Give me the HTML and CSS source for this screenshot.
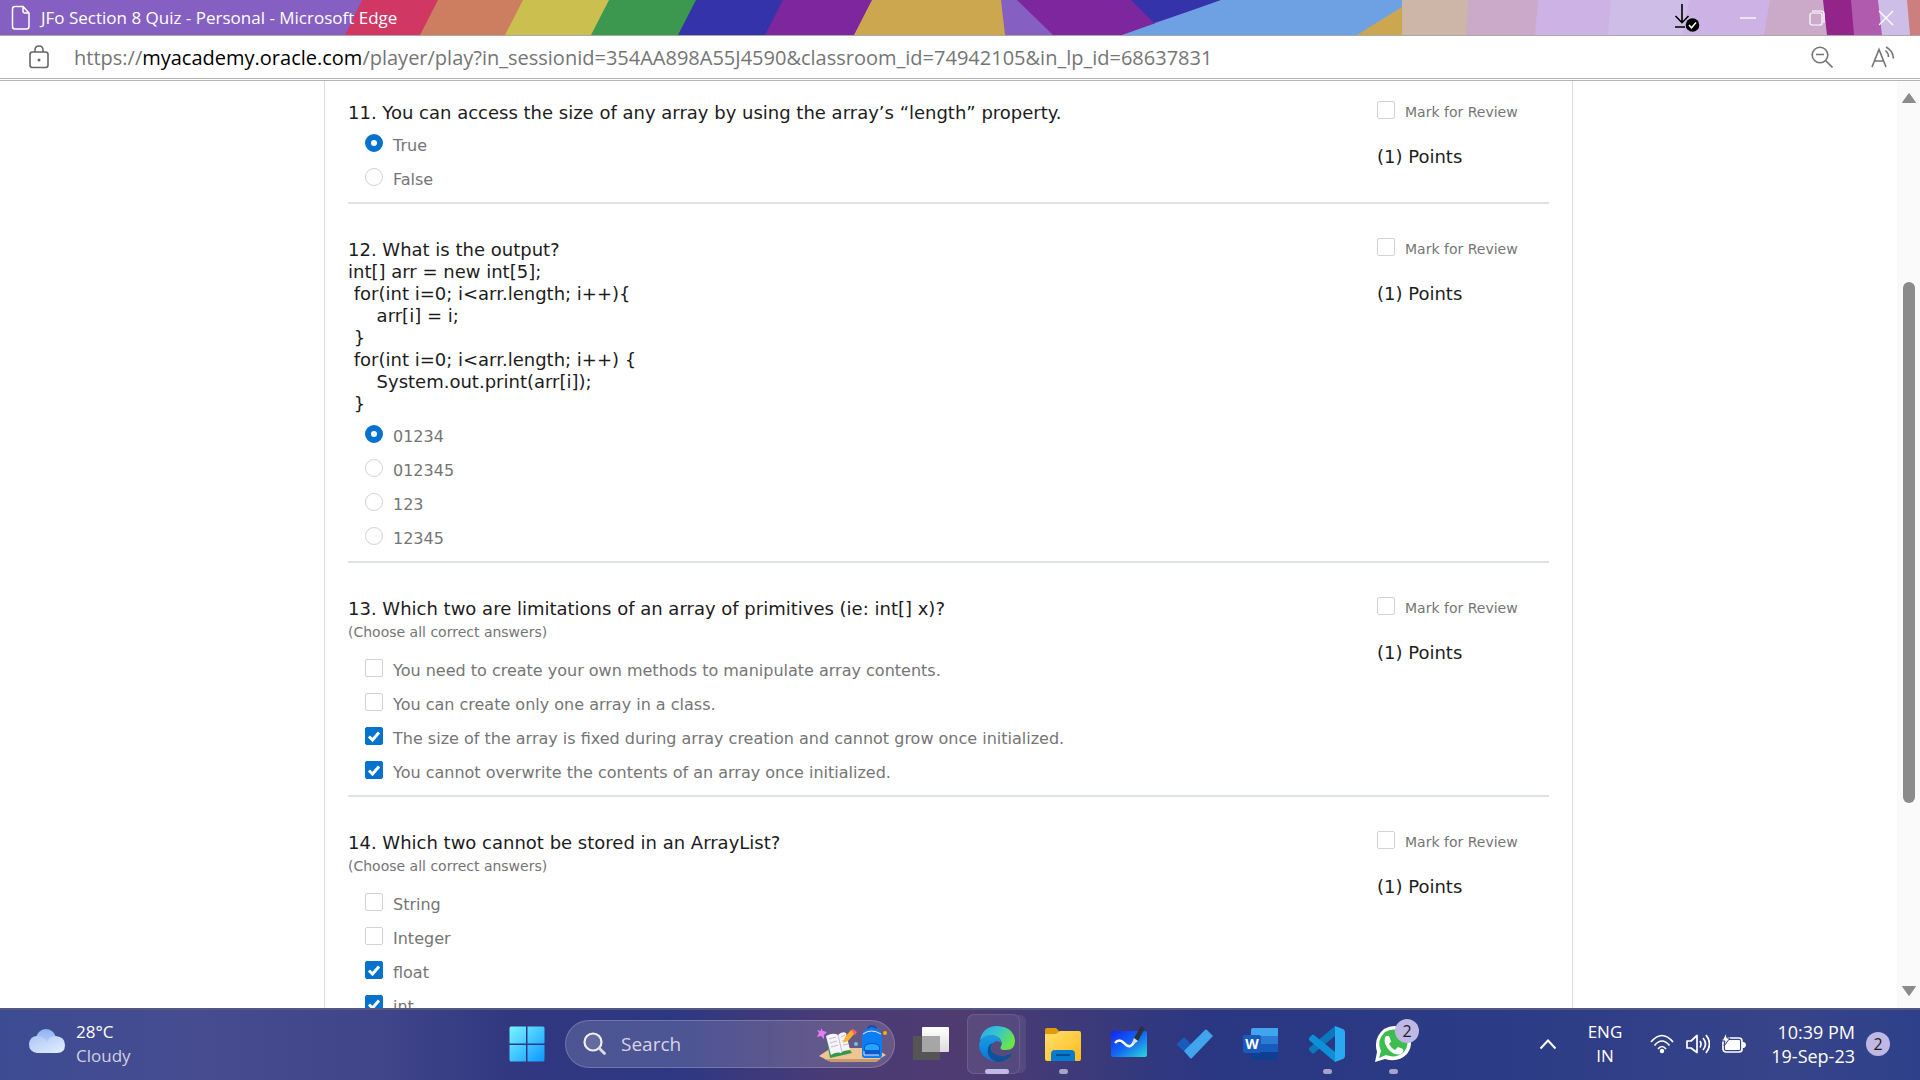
FILE: index.html
```html
<!DOCTYPE html>
<html lang="en">
<head>
<meta charset="UTF-8">
<title>JFo Section 8 Quiz</title>
<link rel="stylesheet" href="styles.css">
</head>
<body>

<header class="titlebar">
	<svg class="stripes" viewBox="0 0 1920 35" preserveAspectRatio="none" aria-hidden="true">
		<path fill="#865fc3" d="M0 0h1920v35H0z"/>
		<path fill="#d03763" d="M362 0h80l-18 35h-79z"/>
		<path fill="#cd7d60" d="M438 0h90l-18 35h-90z"/>
		<path fill="#cbc04f" d="M523 0h90l-18 35h-90z"/>
		<path fill="#3d984f" d="M609 0h90l-18 35h-90z"/>
		<path fill="#3533aa" d="M696 0h90l-18 35h-90z"/>
		<path fill="#7d269e" d="M783 0h90l-18 35h-90z"/>
		<path fill="#cda750" d="M872 0h129l4 35H854z"/>
		<path fill="#7d269e" d="M1017 0h116l23 24-30 11h-73z"/>
		<path fill="#3533aa" d="M1131 0h94l-71 23z"/>
		<path fill="#6da1e4" d="M1221 0h181v35h-280z"/>
		<path fill="#cda750" d="M1402 7v28h-45z"/>
		<path fill="#cdb5a8" d="M1402 0h68l-2 35h-66z"/>
		<path fill="#cba9c9" d="M1468 0h72l-3 35h-71z"/>
		<path fill="#cdb2e5" d="M1538 0h76l-4 35h-75z"/>
		<path fill="#cebee7" d="M1611 0h80l-5 35h-78z"/>
		<path fill="#cdb2e5" d="M1689 0h83l-6 35h-83z"/>
		<path fill="#cba9c9" d="M1770 0h55l4 35h-65z"/>
		<path fill="#93258a" d="M1823 0h29l4 35h-29z"/>
		<path fill="#b05bae" d="M1851 0h29l4 35h-30z"/>
		<path fill="#cebee7" d="M1878 0h30l4 35h-30z"/>
		<path fill="#cd7f80" d="M1907 0h13v35h-10z"/>
	</svg>
	<svg class="page-icon" viewBox="0 0 20 26" aria-hidden="true">
		<path fill="none" stroke="#fff" stroke-width="1.500" d="M12 1.500H4Q1.500 1.500 1.500 4v17.500Q1.500 24 4 24h11.500q2.500 0 2.500-2.500V8zM12 1.500V6q0 2 2 2h4"/>
	</svg>
	<h1 class="window-title">JFo Section 8 Quiz - Personal - Microsoft Edge</h1>
	<div class="window-buttons">
		<button type="button" class="win-btn download" aria-label="Downloads">
			<svg width="26" height="30" viewBox="0 0 26 30"><path fill="none" stroke="#000" stroke-width="1.600" d="M8 1v19M1.500 13L8 19.700 14.500 13M1 24h10"/><circle cx="18.500" cy="22" r="6.800"/><path fill="none" stroke="#fff" stroke-width="1.500" d="M15 22l2.500 2.800 4.500-5.300"/></svg>
		</button>
		<button type="button" class="win-btn" aria-label="Minimize">
			<svg width="16" height="16" viewBox="0 0 16 16"><path stroke="#fff" stroke-width="1.300" d="M0 8h16"/></svg>
		</button>
		<button type="button" class="win-btn" aria-label="Restore">
			<svg width="16" height="16" viewBox="0 0 16 16"><g fill="none" stroke="#fff" stroke-width="1.200"><rect x="1" y="3" width="12" height="12" rx="2"/><path d="M3 1h9q3 0 3 3v9"/></g></svg>
		</button>
		<button type="button" class="win-btn" aria-label="Close">
			<svg width="16" height="16" viewBox="0 0 16 16"><path stroke="#fff" stroke-width="1.300" d="M1 1l14 14M15 1L1 15"/></svg>
		</button>
	</div>
</header>

<div class="address-bar">
	<svg class="lock" viewBox="0 0 20 24" aria-hidden="true">
		<g fill="none" stroke="#666" stroke-width="1.600"><rect x="1" y="7" width="18" height="15.500" rx="2.500"/><path d="M6 7V5q0-4 4-4t4 4v2"/></g><circle cx="10" cy="15" r="1.500" fill="#666"/>
	</svg>
	<div class="url">https://<span class="domain">myacademy.oracle.com</span>/player/play?in_sessionid=354AA898A55J4590&amp;classroom_id=74942105&amp;in_lp_id=68637831</div>
	<button type="button" class="tool" aria-label="Zoom out">
		<svg width="22" height="22" viewBox="0 0 22 22"><g fill="none" stroke="#757575" stroke-width="1.600"><circle cx="9" cy="9" r="7.800"/><path d="M5 8.500h8M14.500 14.500L21.500 21.500"/></g></svg>
	</button>
	<button type="button" class="tool" aria-label="Read aloud">
		<svg width="24" height="22" viewBox="0 0 24 22"><g fill="none" stroke="#757575" stroke-width="1.600"><path d="M1 21L8 3.500 15 21M3.500 15h9M14.500 4.500q3 2.500 3 6.500M15 1q7 3.500 7.500 11.500"/></g></svg>
	</button>
</div>

<div class="viewport">
	<main class="quiz">
		<form>

			<section class="question">
				<div class="body">
					<h2 class="title">11. You can access the size of any array by using the array’s “length” property.</h2>
					<ul class="answers">
						<li><label><input type="radio" name="q11" checked><span>True</span></label></li>
						<li><label><input type="radio" name="q11"><span>False</span></label></li>
					</ul>
				</div>
				<div class="side">
					<label class="review"><input type="checkbox"><span>Mark for Review</span></label>
					<p class="points">(1) Points</p>
				</div>
			</section>

			<section class="question">
				<div class="body">
					<h2 class="title">12. What is the output?</h2>
					<pre class="code">int[] arr = new int[5];
 for(int i=0; i&lt;arr.length; i++){
     arr[i] = i;
 }
 for(int i=0; i&lt;arr.length; i++) {
     System.out.print(arr[i]);
 }</pre>
					<ul class="answers">
						<li><label><input type="radio" name="q12" checked><span>01234</span></label></li>
						<li><label><input type="radio" name="q12"><span>012345</span></label></li>
						<li><label><input type="radio" name="q12"><span>123</span></label></li>
						<li><label><input type="radio" name="q12"><span>12345</span></label></li>
					</ul>
				</div>
				<div class="side">
					<label class="review"><input type="checkbox"><span>Mark for Review</span></label>
					<p class="points">(1) Points</p>
				</div>
			</section>

			<section class="question">
				<div class="body">
					<h2 class="title">13. Which two are limitations of an array of primitives (ie: int[] x)?</h2>
					<p class="hint">(Choose all correct answers)</p>
					<ul class="answers">
						<li><label><input type="checkbox"><span>You need to create your own methods to manipulate array contents.</span></label></li>
						<li><label><input type="checkbox"><span>You can create only one array in a class.</span></label></li>
						<li><label><input type="checkbox" checked><span>The size of the array is fixed during array creation and cannot grow once initialized.</span></label></li>
						<li><label><input type="checkbox" checked><span>You cannot overwrite the contents of an array once initialized.</span></label></li>
					</ul>
				</div>
				<div class="side">
					<label class="review"><input type="checkbox"><span>Mark for Review</span></label>
					<p class="points">(1) Points</p>
				</div>
			</section>

			<section class="question">
				<div class="body">
					<h2 class="title">14. Which two cannot be stored in an ArrayList?</h2>
					<p class="hint">(Choose all correct answers)</p>
					<ul class="answers">
						<li><label><input type="checkbox"><span>String</span></label></li>
						<li><label><input type="checkbox"><span>Integer</span></label></li>
						<li><label><input type="checkbox" checked><span>float</span></label></li>
						<li><label><input type="checkbox" checked><span>int</span></label></li>
					</ul>
				</div>
				<div class="side">
					<label class="review"><input type="checkbox"><span>Mark for Review</span></label>
					<p class="points">(1) Points</p>
				</div>
			</section>

		</form>
	</main>
	<div class="scrollbar" aria-hidden="true">
		<svg width="14" height="10" viewBox="0 0 14 10"><path fill="#8b8b8b" stroke="#8b8b8b" stroke-linejoin="round" d="M7 .500L13.500 9.500H.500z"/></svg>
		<div class="track"><div class="thumb"></div></div>
		<svg width="14" height="10" viewBox="0 0 14 10"><path fill="#8b8b8b" stroke="#8b8b8b" stroke-linejoin="round" d="M7 9.500L13.500 .500H.500z"/></svg>
	</div>
</div>

<footer class="taskbar">
	<div class="weather">
		<svg width="36" height="24" viewBox="0 0 36 24" aria-hidden="true">
			<defs>
				<linearGradient id="cloudBack" x1="0" y1="0" x2="0" y2="1"><stop offset="0" stop-color="#8fb2f2"/><stop offset="1" stop-color="#c5d9fb"/></linearGradient>
				<linearGradient id="cloudFront" x1="0" y1="0" x2="1" y2="1"><stop offset="0" stop-color="#a9c5f5"/><stop offset="1" stop-color="#e6f0ff"/></linearGradient>
			</defs>
			<circle cx="17" cy="10" r="10" fill="url(#cloudBack)"/>
			<path fill="url(#cloudFront)" d="M8 7q7 0 10 6 2-6 9-6 9 1 9 9 0 8-8 8H8q-8-1-8-9 1-8 8-8z"/>
		</svg>
		<p><span class="temp">28°C</span><span class="sky">Cloudy</span></p>
	</div>

	<nav class="apps">
		<button type="button" class="app" aria-label="Start">
			<svg width="36" height="36" viewBox="0 0 36 36">
				<defs><linearGradient id="win" gradientUnits="userSpaceOnUse" x1="0" y1="0" x2="36" y2="36"><stop offset="0" stop-color="#7af6ff"/><stop offset="1" stop-color="#0a96ff"/></linearGradient></defs>
				<path fill="url(#win)" d="M2 .500h15v17H.500V2q0-1.500 1.500-1.500zM18.500.500H34q1.500 0 1.500 1.500v15.500h-17zM.500 19H17v16.500H2q-1.500 0-1.500-1.500zM18.500 19h17v15q0 1.500-1.500 1.500H18.500z"/>
			</svg>
		</button>
		<label class="search">
			<svg width="24" height="24" viewBox="0 0 24 24" aria-hidden="true"><circle cx="10" cy="10" r="8.500" fill="#ffffff22" stroke="#f0f0f5" stroke-width="2.200"/><path stroke="#dcdce4" stroke-width="2.800" stroke-linecap="round" d="M16.500 16.500l5 5"/></svg>
			<input type="search" placeholder="Search" aria-label="Search">
			<svg class="highlight" width="70" height="38" viewBox="0 0 70 38" aria-hidden="true">
				<path fill="#efc596" d="M2 31l12-8h44l11 7-10 6H12z"/>
				<path fill="#c99b6c" d="M7 34h57l-5 3H14z"/>
				<path fill="#e37cf5" d="M4 3l2 3 4 1-3 3 0 4-3-3-4 1 2-4-2-3 4 1z"/>
				<path fill="#2e9a50" d="M9 12l4 21 22-5-2-3-19 4z"/>
				<path fill="#f6f3fb" d="M9 11q7-4 12-1 4-4 8-2l4 17q-6-1-9 3-5-2-10 2z"/>
				<path fill="none" stroke="#a9a4bd" stroke-width=".700" d="M21 10l4 17M12 14l7-2M13 18l7-2M14 22l7-2M24 12l4-2M25 16l5-2M26 20l5-1"/>
				<path fill="#ffb02e" d="M26 18l2-6 6-7 4 3-7 8z"/><path fill="#f8625c" d="M34 5l2-1 4 3-2 3z"/>
				<circle cx="39" cy="19" r="2" fill="#5ad0d8"/><circle cx="68" cy="8" r="2" fill="#ffae00"/>
				<path fill="none" stroke="#1650b0" stroke-width="2" d="M51 5q0-4 4-4t4 4"/>
				<path fill="#0b7ff2" d="M45 14q0-11 10-11t10 11v16q0 3-3 3H48q-3 0-3-3z"/>
				<path fill="#065bc9" d="M47 23q0-5 8-5t8 5v7H47z"/><path fill="#27a3ff" d="M48 22q1-3 7-3t7 3v3H48z"/>
				<path fill="none" stroke="#f3dcff" d="M46 9q8-6 18 0M47 26v4h15"/>
			</svg>
		</label>
		<button type="button" class="app view" aria-label="Task view">
			<svg width="36" height="36" viewBox="0 0 36 36">
				<defs><linearGradient id="tvA" x1="0" y1="0" x2="0" y2="1"><stop offset="0" stop-color="#fff"/><stop offset="1" stop-color="#dcdcdc"/></linearGradient></defs>
				<rect x="9" y="1" width="27" height="25" rx="1" fill="url(#tvA)"/><rect x="0" y="10" width="27" height="24" rx="1" fill="#555"/><path fill="#a6a6a6" d="M9 10h18v16H9z"/>
			</svg>
		</button>
		<button type="button" class="app running active" aria-label="Microsoft Edge">
			<svg width="36" height="36" viewBox="0 0 36 36">
				<defs>
					<linearGradient id="edgeA" x1="0" y1="0" x2="1" y2=".5"><stop offset="0" stop-color="#2aa7ee"/><stop offset=".5" stop-color="#36c5d0"/><stop offset="1" stop-color="#69e647"/></linearGradient>
					<linearGradient id="edgeB" x1="0" y1="0" x2="0" y2="1"><stop offset="0" stop-color="#1c9ce0"/><stop offset="1" stop-color="#0678d8"/></linearGradient>
				</defs>
				<path fill="url(#edgeA)" d="M1 14Q4 0 18 0q17 1 18 15 0 10-11 9-5 0-3-4 2-3-1-7-5-6-14-2-3 1-6 3z"/>
				<path fill="url(#edgeB)" d="M0 18Q2 9 12 9q9 0 10 8-4-4-8 0-4 6 1 12 5 5 10 5-5 3-11 1Q0 31 0 18z"/>
				<path fill="#0f5196" d="M14 17q-4 5 0 10 7 6 17 1 3-1 1 2-6 6-14 6Q7 32 9 22q1-4 5-5z"/>
			</svg>
		</button>
		<button type="button" class="app running" aria-label="File Explorer">
			<svg width="36" height="36" viewBox="0 0 36 36">
				<defs><linearGradient id="folder" x1="0" y1="0" x2="1" y2="1"><stop offset="0" stop-color="#ffdf70"/><stop offset="1" stop-color="#fcbc16"/></linearGradient></defs>
				<path fill="#df9c08" d="M0 4q0-2 2-2h9l4 4v6H0z"/><path fill="url(#folder)" d="M0 8h11l4-3h19q2 0 2 2v26q0 2-2 2H2q-2 0-2-2z"/><path fill="#087bd0" d="M6 35v-7q0-4 4-4h16q4 0 4 4v7z"/><path stroke="#08508f" stroke-width="2" d="M11 29h14"/>
			</svg>
		</button>
		<button type="button" class="app" aria-label="Whiteboard">
			<svg width="36" height="36" viewBox="0 0 36 36">
				<defs><linearGradient id="board" x1="0" y1="0" x2="1" y2="1"><stop offset="0" stop-color="#1425f2"/><stop offset=".5" stop-color="#1168f5"/><stop offset="1" stop-color="#30d6d7"/></linearGradient></defs>
				<rect y="5" width="36" height="26" rx="2" fill="url(#board)"/><path fill="none" stroke="#fff" stroke-width="2.500" d="M4 17q4-5 9 0 6 7 10-1"/><path fill="#303038" d="M23 12L30 0l4 2-7 13z"/><path fill="#ddd" d="M21 17l2-5 4 3-4 3z"/>
			</svg>
		</button>
		<button type="button" class="app" aria-label="To Do">
			<svg width="36" height="36" viewBox="0 0 36 36">
				<path fill="#185abd" d="M0 18l6-6q1-1 2 0l9 9-7 7L0 19z"/><path fill="#41a5ee" d="M7 25L28 4q1-1 2 0l6 6-21 22q-1 1-2 0z"/>
			</svg>
		</button>
		<button type="button" class="app" aria-label="Word">
			<svg width="36" height="36" viewBox="0 0 36 36">
				<path fill="#41a5ee" d="M8 4q0-2 2-2h25v8H8z"/><path fill="#2b7cd3" d="M8 10h27v8H8z"/><path fill="#185abd" d="M8 18h27v8H8z"/><path fill="#103f91" d="M8 26h27v8H10q-2 0-2-2z"/><rect y="9" width="18" height="18" rx="2" fill="#185abd"/><text x="9" y="23" text-anchor="middle" class="word-letter">W</text>
			</svg>
		</button>
		<button type="button" class="app running" aria-label="Visual Studio Code">
			<svg width="36" height="36" viewBox="0 0 36 36">
				<path fill="#0a78bd" d="M26 0v10L5 27q-1 1-2 0l-3-3q-1-1 0-2z"/><path fill="#0e90d8" d="M26 36V26L5 9q-1-1-2 0l-3 3q-1 1 0 2z"/><path fill="#29a9f2" d="M26 0l8 3q2 1 2 3v24q0 2-2 3l-8 3z"/>
			</svg>
		</button>
		<button type="button" class="app running" aria-label="WhatsApp">
			<svg width="36" height="36" viewBox="0 0 36 36">
				<path fill="#fff" d="M0 36l2-10Q-2 12 9 3q13-7 23 3 8 11 0 22-9 9-22 5z"/><path fill="#3dbd4e" d="M4 32l2-7Q1 14 10 6q10-6 19 2 7 9 0 18-8 7-18 3z"/><path fill="#fff" d="M10 11q2-2 4-1l2 5q0 1-2 3 2 4 6 6l3-3 5 2q1 3-2 5-5 2-11-3-7-7-5-14z"/>
			</svg>
			<span class="badge on-app">2</span>
		</button>
	</nav>

	<div class="tray">
		<button type="button" class="tray-btn" aria-label="Show hidden icons">
			<svg width="18" height="12" viewBox="0 0 18 12"><path fill="none" stroke="#fff" stroke-width="2" d="M1.500 10.500L9 2.500l7.500 8"/></svg>
		</button>
		<p class="lang"><span>ENG</span><span>IN</span></p>
		<div class="status">
			<svg width="24" height="20" viewBox="0 0 24 20" aria-hidden="true"><g fill="none" stroke="#fff" stroke-width="1.700"><path d="M1 8q11-13 22 0M4.500 11.500q7.500-9 15 0M8 15q4-5 8 0"/></g><circle cx="12" cy="17" r="2.200" fill="#fff"/></svg>
			<svg width="24" height="20" viewBox="0 0 24 20" aria-hidden="true"><g fill="none" stroke="#fff" stroke-width="1.700"><path stroke-linejoin="round" d="M1 7h4l6-5.500v17L5 14H1zM14 7q2 3 0 6.500M17 4q5 6 0 12M20 1q7 9 0 18"/></g></svg>
			<svg width="24" height="22" viewBox="0 0 24 22" aria-hidden="true"><rect x="1" y="5" width="19" height="14" rx="3" fill="none" stroke="#fff" stroke-width="1.700"/><rect x="3" y="7" width="15" height="10" rx="1" fill="#fff"/><path fill="#fff" d="M20 9h2q2 1 2 3t-2 3h-2z"/><path fill="#fff" stroke="#2e408b" d="M4 0L0 8h3l-1 5 6-8H5z"/></svg>
		</div>
		<p class="clock"><span>10:39 PM</span><span>19-Sep-23</span></p>
		<span class="badge">2</span>
	</div>
</footer>

</body>
</html>
```

FILE: styles.css
```css
* {
	box-sizing: border-box;
}

body {
	margin: 0;
	height: 100vh;
	display: flex;
	flex-direction: column;
	overflow: hidden;
	background: #fff;
	font-family: "DejaVu Sans", sans-serif;
	color: #1c1c1c;
}

h1, h2, p, ul, pre {
	margin: 0;
	padding: 0;
	font-weight: normal;
}

button {
	border: 0;
	padding: 0;
	background: none;
}

svg {
	display: block;
	flex: none;
}

/* window frame */
.titlebar {
	position: relative;
	height: 36px;
	flex: none;
	display: flex;
	align-items: center;
	padding-left: 11px;
	border-bottom: 1px solid #a9a9a9;
	font-family: "Open Sans", sans-serif;
	color: #fff;
}

.stripes {
	position: absolute;
	top: 0;
	left: 0;
	width: 100%;
	height: 100%;
	z-index: -1;
}

.page-icon {
	width: 20px;
	height: 26px;
}

.window-title {
	margin-left: 10px;
	font-size: 17px;
}

.window-buttons {
	margin-left: auto;
	display: flex;
}

.win-btn {
	width: 69px;
	height: 35px;
	display: flex;
	align-items: center;
	justify-content: center;
}

.win-btn.download {
	width: 52px;
}

.address-bar {
	flex: none;
	height: 45px;
	display: flex;
	align-items: center;
	gap: 38px;
	padding: 0 25px 0 29px;
	border-bottom: 3px double #b4b4b4;
	font-family: "Open Sans", sans-serif;
	font-size: 20px;
	color: #757575;
}

.lock {
	width: 20px;
	height: 24px;
}

.url {
	flex: 1;
	margin-left: -13px;
	white-space: nowrap;
}

.domain {
	color: #000;
}

/* page */
.viewport {
	flex: 1;
	min-height: 0;
	display: flex;
	overflow: hidden;
}

.quiz {
	width: 100%;
	max-width: 1249px;
	margin: 0 auto;
	padding: 20px 23px 0;
	border: 1px solid #dcdcdc;
	border-width: 0 1px;
	overflow: hidden;
}

.question {
	display: flex;
	justify-content: space-between;
	padding-bottom: 8px;
	margin-bottom: 34px;
	border-bottom: 2px solid #dfe2e7;
}

.body {
	padding-top: 1px;
}

.title, .code, .points {
	font-family: "DejaVu Sans", sans-serif;
	font-size: 18px;
	line-height: 22px;
}

.hint {
	margin-top: 1px;
	font-size: 14px;
	line-height: 22px;
	color: #757575;
}

.answers {
	list-style: none;
	margin-top: 2px;
	padding-left: 17px;
}

.hint + .answers {
	margin-top: 8px;
}

.answers label {
	display: flex;
	align-items: center;
	gap: 10px;
	height: 34px;
	font-size: 16px;
	color: #757575;
}

.answers span,
.review span {
	padding-top: 4px;
}

.side {
	width: 172px;
	flex: none;
}

.review {
	display: flex;
	align-items: center;
	gap: 10px;
	height: 18px;
	font-size: 14px;
	color: #757575;
}

.points {
	margin-top: 27px;
}

input[type=radio],
input[type=checkbox] {
	appearance: none;
	flex: none;
	width: 18px;
	height: 18px;
	margin: 0;
	border: 1px solid #d3d3d3;
	border-radius: 2px;
	background: #fff;
}

input[type=radio] {
	border-radius: 50%;
}

input[type=radio]:checked {
	border: 6px solid #0572ce;
}

input[type=checkbox]:checked {
	border-color: #0572ce;
	background: #0572ce url("data:image/svg+xml,%3Csvg xmlns='http://www.w3.org/2000/svg' viewBox='0 0 16 16'%3E%3Cpath d='M3 8.500L6.500 12L13 4.500' fill='none' stroke='white' stroke-width='3'/%3E%3C/svg%3E");
}

.scrollbar {
	width: 23px;
	flex: none;
	display: flex;
	flex-direction: column;
	align-items: center;
	gap: 5px;
	padding: 12px 0;
	background: #fafafa;
}

.track {
	flex: 1;
	display: grid;
	grid-template-rows: 174fr 521fr 178fr;
}

.thumb {
	grid-row: 2;
	width: 12px;
	border-radius: 6px;
	background: #8b8b8b;
}

/* taskbar */
.taskbar {
	flex: none;
	height: 72px;
	display: grid;
	grid-template-columns: 1fr auto 1fr;
	padding-bottom: 2px;
	border-top: 2px solid #54577f;
	background: linear-gradient(90deg, #3c4c93 0, #474c90 10%, #40458a 20%, #31377f 27%, #2d3883 35%, #493b76 43%, #4f3b70 50%, #3d3a79 56%, #2a3783 63%, #2c3c86 80%, #374489 93%, #2e408b 100%);
	font-family: "Open Sans", sans-serif;
	font-size: 17px;
	line-height: 24px;
	color: #fff;
}

.taskbar p span {
	display: block;
}

.weather {
	display: flex;
	align-items: center;
	gap: 11px;
	padding-left: 29px;
}

.weather svg {
	margin-bottom: 6px;
}

.sky {
	color: #d0d0e2;
}

.apps {
	display: flex;
	align-items: center;
}

.app {
	position: relative;
	width: 66px;
	height: 68px;
	display: flex;
	align-items: center;
	justify-content: center;
}

.running::after {
	content: "";
	position: absolute;
	bottom: 4px;
	width: 9px;
	height: 5px;
	border-radius: 3px;
	background: #a6a3ca;
}

.active::before {
	content: "";
	position: absolute;
	inset: 4px 10px 4px 3px;
	border: 1px solid #ffffff1c;
	border-radius: 7px;
	background: #ffffff14;
	box-shadow: 7px 0 0 -1px #ffffff14;
}

.active::after {
	width: 24px;
	background: #c0bbe6;
}

.active svg {
	position: relative;
}

.search {
	display: flex;
	align-items: center;
	width: 330px;
	height: 48px;
	margin: 0 3px 0 5px;
	padding: 0 7px 0 17px;
	border: 1px solid #ffffff30;
	border-radius: 24px;
	background: #ffffff26;
}

.search input {
	flex: 1;
	min-width: 0;
	border: 0;
	padding: 0 0 0 14px;
	background: none;
	font-family: "Open Sans", sans-serif;
	font-size: 19px;
}

.search input::placeholder {
	color: #d6d6e4;
}

.word-letter {
	font: bold 14px "Open Sans", sans-serif;
	fill: #fff;
}

.badge {
	width: 24px;
	height: 24px;
	border-radius: 50%;
	background: #bfb7e4;
	color: #1c1c1c;
	font: 16px/24px "Open Sans", sans-serif;
	text-align: center;
}

.on-app {
	position: absolute;
	top: 9px;
	right: 7px;
}

.tray {
	display: flex;
	align-items: center;
	justify-content: flex-end;
	padding-right: 30px;
}

.lang {
	margin: 0 28px 0 31px;
	text-align: center;
}

.status {
	display: flex;
	align-items: center;
	gap: 12px;
}

.clock {
	margin: 0 11px 0 25px;
	font-size: 18px;
	text-align: right;
}
```
